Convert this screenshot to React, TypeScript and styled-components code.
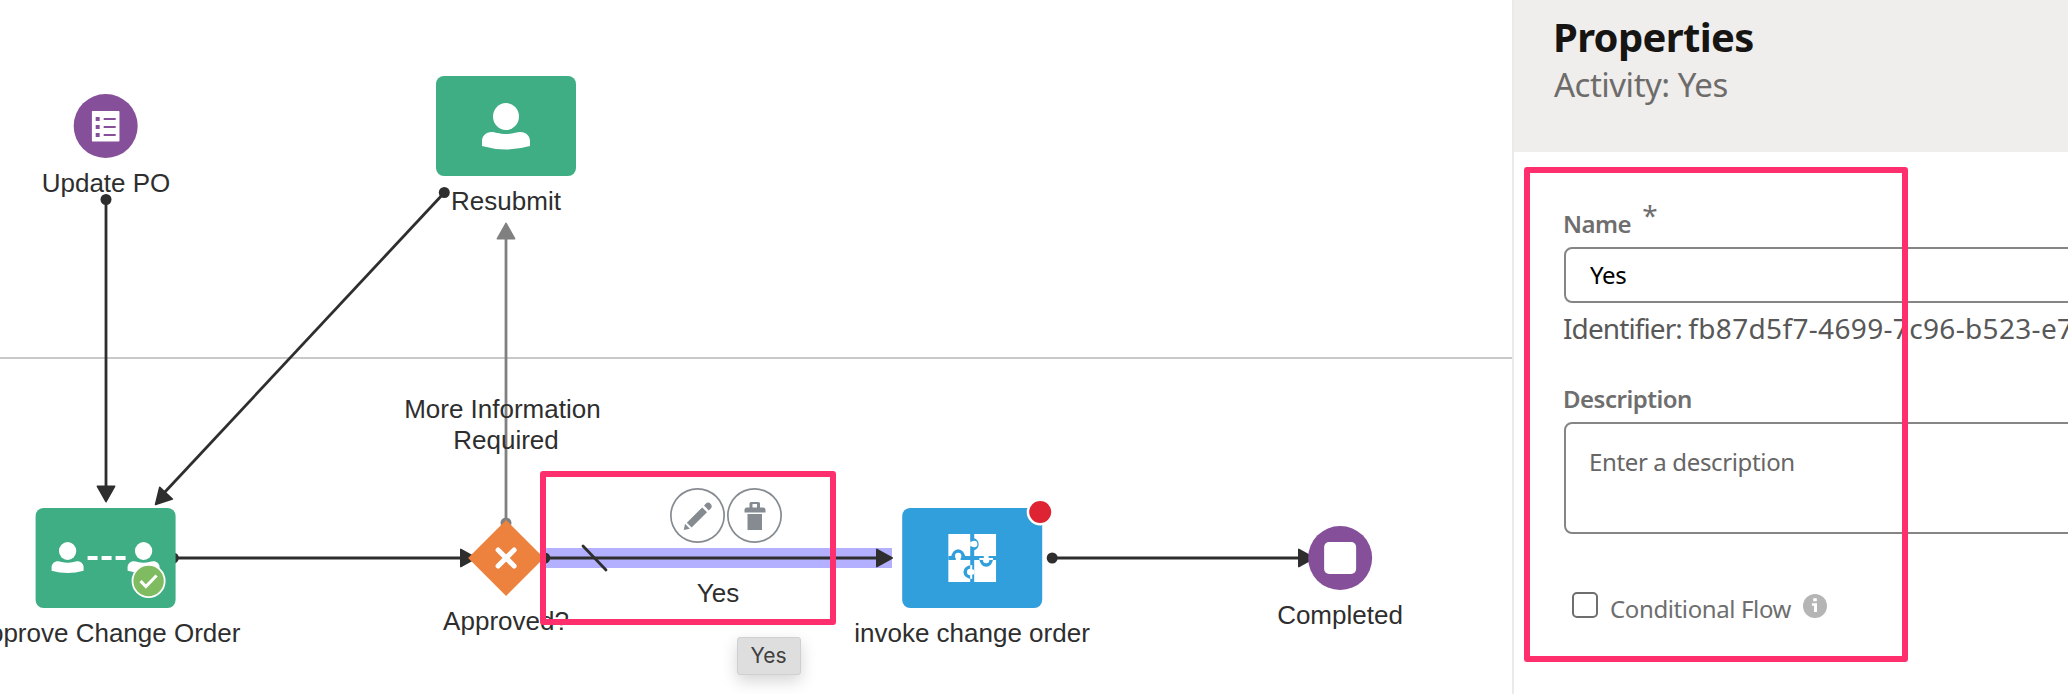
import React from 'react';
import styled, { createGlobalStyle } from 'styled-components';

const ink = '#2e2e2e';
const green = '#3fae84';
const purple = '#854f99';
const blue = '#329fdd';
const pink = '#ff2e6c';

const GlobalStyle = createGlobalStyle`
  *, *::before, *::after { box-sizing: border-box; }
  html, body { margin: 0; height: 100%; overflow: hidden; background: #fff; }
`;

const Page = styled.div`
  position: relative;
  display: grid;
  grid-template-columns: 1512px 1fr;
  height: 694px;
  overflow: hidden;
  background: #fff;
`;

/* ---------- Diagram canvas ---------- */

const Canvas = styled.main`
  position: relative;
  overflow: hidden;
  font-family: 'Liberation Sans', Arial, sans-serif;
  font-size: 26px;
  line-height: 30px;
  color: ${ink};
`;

const Swimlane = styled.section`
  height: 359px;
  border-bottom: 2px solid #c9c9c9;
`;

const Connectors = styled.svg`
  position: absolute;
  inset: 0;
  width: 1512px;
  height: 694px;
`;

const Node = styled.div<{ $x: number; $y: number }>`
  position: absolute;
  left: ${(p) => p.$x}px;
  top: ${(p) => p.$y}px;
  transform: translateX(-50%);
  display: flex;
  flex-direction: column;
  align-items: center;
  gap: 10px;
  white-space: nowrap;
`;

const Task = styled.div<{ $color: string }>`
  position: relative;
  display: flex;
  align-items: center;
  justify-content: center;
  width: 140px;
  height: 100px;
  border-radius: 8px;
  background: ${(p) => p.$color};
`;

const EventCircle = styled.div`
  display: flex;
  align-items: center;
  justify-content: center;
  width: 64px;
  height: 64px;
  border-radius: 50%;
  background: ${purple};
`;

const StopMark = styled.div`
  width: 32px;
  height: 32px;
  border-radius: 5px;
  background: #fff;
`;

const ErrorDot = styled.span`
  position: absolute;
  top: -7px;
  right: -9px;
  width: 22px;
  height: 22px;
  border-radius: 50%;
  background: #de2332;
  box-shadow: 0 0 0 2.5px #fff;
`;

const FlowLabel = styled.div<{ $x: number; $y: number }>`
  position: absolute;
  left: ${(p) => p.$x}px;
  top: ${(p) => p.$y}px;
  transform: translateX(-50%);
  text-align: center;
  line-height: 31px;
  white-space: pre;
`;

const ActionBar = styled.div`
  position: absolute;
  left: 670px;
  top: 488px;
  display: flex;
  gap: 2px;
`;

const RoundButton = styled.button`
  display: flex;
  align-items: center;
  justify-content: center;
  width: 55px;
  height: 55px;
  padding: 0;
  border: 0;
  border-radius: 50%;
  background: #fff;
  box-shadow: inset 0 0 0 1.7px #858b90;
`;

const Tooltip = styled.div`
  position: absolute;
  left: 737px;
  top: 637px;
  display: flex;
  align-items: center;
  justify-content: center;
  width: 64px;
  height: 38px;
  padding-right: 1px;
  border: 1px solid #cfcfcf;
  border-radius: 3px;
  background: #dedede;
  box-shadow: 0 6px 16px rgba(0, 0, 0, 0.17);
  color: #404040;
  font-family: Inter, sans-serif;
  font-size: 21px;
  line-height: 26px;
`;

const Highlight = styled.div<{ $x: number; $y: number; $w: number; $h: number }>`
  position: absolute;
  left: ${(p) => p.$x}px;
  top: ${(p) => p.$y}px;
  width: ${(p) => p.$w}px;
  height: ${(p) => p.$h}px;
  border: 6px solid ${pink};
  border-radius: 3px;
  pointer-events: none;
`;

/* ---------- Properties panel ---------- */

const Panel = styled.aside`
  border-left: 2px solid #eaeaea;
  overflow: hidden;
  font-family: 'Noto Sans', 'Open Sans', sans-serif;
`;

const PanelHeader = styled.header`
  height: 152px;
  padding: 13px 0 0 39px;
  background: #efeeec;
`;

const Title = styled.h1`
  margin: 0 0 4px;
  font-size: 40px;
  line-height: 48px;
  font-weight: 700;
  letter-spacing: -0.65px;
  color: #161513;
`;

const Subtitle = styled.p`
  margin: 0 0 0 1px;
  font-size: 33px;
  line-height: 40px;
  letter-spacing: -0.5px;
  color: #6e6c6a;
`;

const Form = styled.form`
  display: flex;
  flex-direction: column;
  width: 640px;
  padding: 57px 0 0 50px;
`;

const FieldLabel = styled.label`
  display: flex;
  margin: 0 0 8px -1px;
  font-size: 24px;
  line-height: 30px;
  font-weight: 600;
  letter-spacing: -0.5px;
  color: #6e6e6e;
`;

const Required = styled.span`
  margin: -9px 0 0 11px;
  height: 30px;
  font-size: 28px;
  font-weight: 400;
`;

const TextInput = styled.input`
  height: 56px;
  padding: 0 24px 2px;
  border: 2px solid #858585;
  border-radius: 8px;
  background: #fff;
  font: 400 24px/30px 'Noto Sans', sans-serif;
  letter-spacing: -0.3px;
  color: #000;
`;

const Identifier = styled.p`
  margin: 7px 0 38px -1px;
  font-size: 28px;
  line-height: 36px;
  letter-spacing: -0.9px;
  white-space: nowrap;
  color: #585858;
`;

const IdentifierValue = styled.span`
  letter-spacing: 0.33px;
`;

const TextArea = styled.textarea`
  height: 112px;
  padding: 23px 23px;
  border: 2px solid #858585;
  border-radius: 8px;
  resize: none;
  overflow: hidden;
  background: #fff;
  font: 400 24px/30px 'Noto Sans', sans-serif;
  letter-spacing: -0.36px;
  &::placeholder { color: #666; opacity: 1; }
`;

const CheckRow = styled.div`
  display: flex;
  align-items: flex-start;
  margin: 58px 0 0 8px;
`;

const Checkbox = styled.input`
  appearance: none;
  width: 26px;
  height: 26px;
  margin: 0 12px 0 0;
  border: 2px solid #6e6e6e;
  border-radius: 5px;
  background: #fff;
`;

const CheckLabel = styled.label`
  margin: 2px 12px 0 0;
  font-size: 24px;
  line-height: 30px;
  letter-spacing: -0.38px;
  color: #6e6e6e;
`;

const InfoSvg = styled.svg`
  margin-top: 2px;
`;

/* ---------- Drawings ---------- */

const PersonShape = () => (
  <>
    <ellipse cx="24" cy="13.5" rx="13" ry="13.5" />
    <path d="M0 43V38C0 33 4 29 9.500 29C13 29 17 31 24 31S35 29 38.500 29C44 29 48 33 48 38V43Q36 46.500 24 46.500T0 43Z" />
  </>
);

const PersonIcon = () => (
  <svg width="48" height="47" viewBox="0 0 48 47" fill="#fff"><PersonShape /></svg>
);

const ApprovalIcon = () => (
  <svg width="140" height="100" viewBox="0 0 140 100">
    <g fill="#fff">
      <g transform="translate(16 34) scale(.667)"><PersonShape /></g>
      <g transform="translate(92 34) scale(.667)"><PersonShape /></g>
      <path d="M52 48h10v4H52zM66 48h10v4H66zM80 48h10v4H80z" />
    </g>
    <circle cx="113" cy="73" r="16.100" fill="#7fbb60" stroke="#fff" strokeWidth="1.800" />
    <path d="M105 73l5.300 5.500L121 67.500" fill="none" stroke="#fff" strokeWidth="3.200" />
  </svg>
);

const ListIcon = () => (
  <svg width="28" height="31" viewBox="0 0 28 31">
    <rect width="28" height="30.500" rx="1" fill="#fff" />
    <path fill={purple} d="M4 6h4v4H4zM4 14h4v4H4zM4 22h4v4H4zM12 7h12v2H12zM12 15h12v2H12zM12 23h12v2H12z" />
  </svg>
);

const PuzzleIcon = () => (
  <svg width="48" height="48" viewBox="0 0 48 48">
    <path fill="#fff" d="M0 0h48v48H0z" />
    <path fill={blue} d="M22 0h4v48h-4zM0 22h48v4H0zM3 24a7 8.800 0 0 1 14 0zM31 24a7 8.800 0 0 0 14 0zM24 3.500a8.800 7 0 0 1 0 13.500zM24 31a8.800 7 0 0 0 0 14z" />
    <g fill="#fff">
      <circle cx="10" cy="22" r="3.200" /><path d="M8.500 22h3l1 4h-5z" />
      <circle cx="38" cy="26" r="3.200" /><path d="M35.500 22h5l-1 4h-3z" />
      <circle cx="26" cy="10" r="3.200" /><path d="M22 7.500l4 1v3l-4 1z" />
      <circle cx="22" cy="38" r="3.200" /><path d="M26 35.500l-4 1v3l4 1z" />
    </g>
  </svg>
);

const GatewayIcon = () => (
  <svg width="76" height="76" viewBox="0 0 76 76">
    <path d="M38 0L76 38L38 76L0 38Z" fill="#ed813e" />
    <path d="M30 30L46 46M46 30L30 46" stroke="#fff" strokeWidth="5" strokeLinecap="round" />
  </svg>
);

const PencilIcon = () => (
  <svg width="30" height="30" viewBox="0 0 30 30" fill="#858b90">
    <path d="M.800 29L2 22.800L6.800 27.700ZM3.800 21.800L19.200 6.400L24 11.200L8.600 26.600ZM21 4.600L23.500 2.100Q25.500.600 27.500 2.700T28.300 6.900L25.800 9.400Z" />
  </svg>
);

const TrashIcon = () => (
  <svg width="22" height="30" viewBox="0 0 22 30" fill="#858b90">
    <path fillRule="evenodd" d="M5.500 6.500V2.500Q5.500 1 7 1h7.500Q16 1 16 2.500V6.500H19Q21.500 6.500 21.500 9V11.500H.500V9Q.500 6.500 3 6.500ZM8.500 3V6.500H13V3ZM3.500 13H18V29H3.500Z" />
  </svg>
);

const InfoIcon = () => (
  <InfoSvg width="24" height="24" viewBox="0 0 24 24">
    <circle cx="12" cy="12" r="12" fill="#b5b5b5" />
    <path fill="#fff" d="M10.200 4.300h3.600v3h-3.600zM9 9.200h5V18h-3v-6.200H9z" />
  </InfoSvg>
);

const Arrow = ({ x, y, angle, color = ink }: { x: number; y: number; angle: number; color?: string }) => (
  <path
    d="M-.8 0L-16.200 -8.600V8.600Z"
    transform={`translate(${x} ${y}) rotate(${angle})`}
    fill={color}
    stroke={color}
    strokeWidth="1.600"
    strokeLinejoin="round"
  />
);

const FlowLines = () => (
  <Connectors viewBox="0 0 1512 694">
    <rect x="540" y="548" width="352" height="20" fill="#b3b1ff" />
    <g fill="none" stroke={ink} strokeWidth="2.800">
      <path d="M106 200V488" />
      <path d="M444 193L164 493" />
      <path d="M176 558H464" />
      <path d="M544 558H880" />
      <path d="M1052 558H1302" />
      <path d="M583 546L606 570" strokeLinecap="round" />
      <path d="M506 523V236" stroke="#808080" />
    </g>
    <g fill={ink}>
      <circle cx="106" cy="199.500" r="5.500" />
      <circle cx="444.300" cy="192.500" r="5.500" />
      <circle cx="173.300" cy="558" r="5.500" />
      <circle cx="544.800" cy="558" r="5.500" />
      <circle cx="1052.200" cy="558" r="5.500" />
      <circle cx="506" cy="523" r="5.500" fill="#808080" />
    </g>
    <Arrow x={106} y={502.5} angle={90} />
    <Arrow x={155} y={505} angle={133} />
    <Arrow x={477} y={558} angle={0} />
    <Arrow x={893} y={558} angle={0} />
    <Arrow x={1315} y={558} angle={0} />
    <Arrow x={506} y={222.5} angle={-90} color="#808080" />
  </Connectors>
);

export default function App() {
  return (
    <Page>
      <GlobalStyle />
      <Canvas>
        <Swimlane />
        <FlowLines />

        <Node $x={106} $y={94}>
          <EventCircle><ListIcon /></EventCircle>
          <span>Update PO</span>
        </Node>
        <Node $x={506} $y={76}>
          <Task $color={green}><PersonIcon /></Task>
          <span>Resubmit</span>
        </Node>
        <Node $x={106} $y={508}>
          <Task $color={green}><ApprovalIcon /></Task>
          <span>Approve Change Order</span>
        </Node>
        <Node $x={506} $y={520}>
          <GatewayIcon />
          <span>Approved?</span>
        </Node>
        <Node $x={972} $y={508}>
          <Task $color={blue}><PuzzleIcon /><ErrorDot /></Task>
          <span>invoke change order</span>
        </Node>
        <Node $x={1340} $y={526}>
          <EventCircle><StopMark /></EventCircle>
          <span>Completed</span>
        </Node>

        <FlowLabel $x={506} $y={394}>{'More Information \nRequired'}</FlowLabel>
        <FlowLabel $x={718} $y={578}>Yes</FlowLabel>

        <ActionBar>
          <RoundButton type="button" aria-label="Edit"><PencilIcon /></RoundButton>
          <RoundButton type="button" aria-label="Delete"><TrashIcon /></RoundButton>
        </ActionBar>
        <Tooltip role="tooltip">Yes</Tooltip>
      </Canvas>

      <Panel>
        <PanelHeader>
          <Title>Properties</Title>
          <Subtitle>Activity: Yes</Subtitle>
        </PanelHeader>
        <Form>
          <FieldLabel htmlFor="name">Name<Required>*</Required></FieldLabel>
          <TextInput id="name" defaultValue="Yes" />
          <Identifier>Identifier: <IdentifierValue>fb87d5f7-4699-7c96-b523-e7</IdentifierValue></Identifier>
          <FieldLabel htmlFor="description">Description</FieldLabel>
          <TextArea id="description" placeholder="Enter a description" />
          <CheckRow>
            <Checkbox type="checkbox" id="conditional" />
            <CheckLabel htmlFor="conditional">Conditional Flow</CheckLabel>
            <InfoIcon />
          </CheckRow>
        </Form>
      </Panel>

      <Highlight $x={540} $y={471} $w={296} $h={154} />
      <Highlight $x={1524} $y={167} $w={384} $h={495} />
    </Page>
  );
}
